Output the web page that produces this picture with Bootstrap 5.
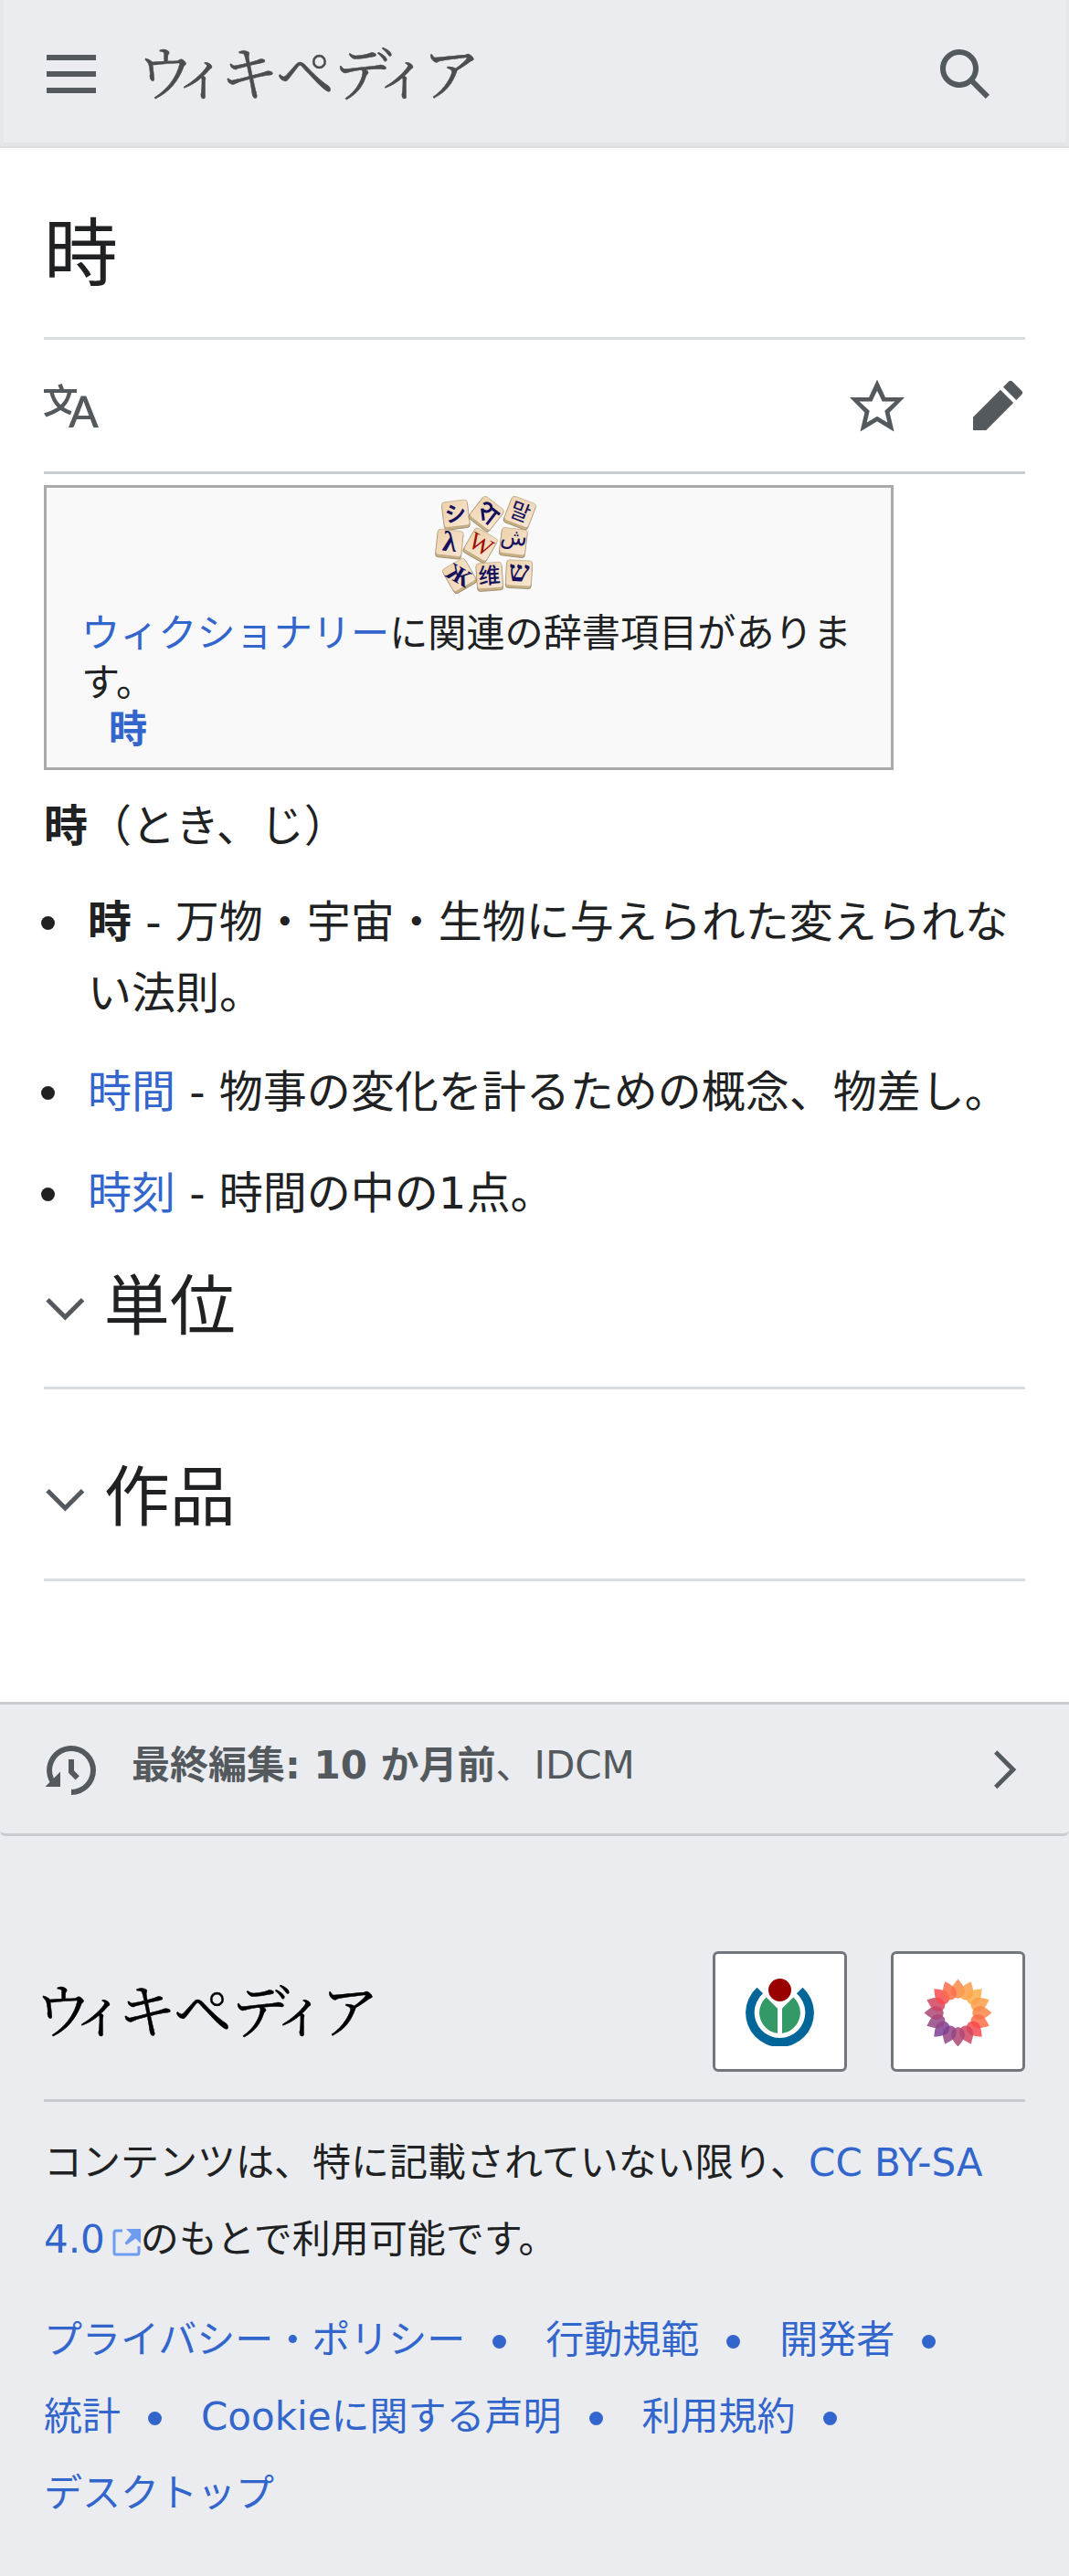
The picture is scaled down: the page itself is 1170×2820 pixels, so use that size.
<!DOCTYPE html>
<html lang="ja">
<head>
<meta charset="utf-8">
<meta name="viewport" content="width=device-width, initial-scale=1">
<title>時 - ウィキペディア</title>
<link href="https://cdn.jsdelivr.net/npm/bootstrap@5.3.0/dist/css/bootstrap.min.css" rel="stylesheet">
<style>
body{font-family:"DejaVu Sans","Noto Sans CJK JP",sans-serif;font-size:48px;line-height:79.2px;color:#202122;background:#eaecf0}
a{color:#36c;text-decoration:none}
svg{display:block;flex:none}
.ico{width:60px;height:60px;fill:#54595d}
.ico-s{width:46.67px;height:46.67px;fill:#54595d}
.btn-plain{padding:0;border:0;background:none}
.site-head{height:162px;padding:0 84px 0 48px;background:#eaecf0;box-shadow:inset 0 -2px 0 #dcdee1,inset 4px 0 0 #e5e7ea,inset -3px 0 0 #e5e7ea,inset 0 -6px 0 #e3e5e8}
.head-brand{padding-left:51px}
.wordmark{width:366px;height:72px;overflow:visible}
.wordmark text{font-family:"Noto Serif CJK JP","Noto Sans CJK JP",sans-serif;font-weight:400;font-size:64px;text-anchor:middle}
.page-body{background:#fff;padding:0 48px;height:1701px}
.page-title{height:210px;padding-top:58px;font-size:81px;line-height:117px;border-bottom:3px solid #dadde0;margin:0}
.tools{height:147px;border-bottom:3px solid #c8ccd1}
.tool-gap{margin-right:72px}
.sister{width:930px;height:312px;margin-top:12px;padding:9px 1px 0 38px;border:3px solid #aaa;background:#f9f9f9;font-size:42.15px;line-height:54px}
.sister svg{margin:0 auto 16px}
.sister-link{padding-left:30px;line-height:48px}
.lede{margin:22px 0 26px}
.defs{margin:0 0 0 -3px;padding:0;list-style:none}
.defs li{display:flex;gap:36px;line-height:78px}
.defs li::before{content:"";flex:none;width:15px;height:15px;border-radius:50%;background:#202122;margin-top:33px}
.defs li+li{margin-top:30px}
.defs li+li+li{margin-top:33px}
.sec{border-bottom:3px solid #dadde0}
.sec h2{font-size:72px;line-height:96px;margin:0 0 0 19px;font-weight:400}
.sec-first{height:176px;padding-top:4px}
.sec-first h2{padding-bottom:8px}
.sec-next{height:210px;padding-top:36px}
.sec-next h2{padding-bottom:8px}
.last-mod{height:147px;padding:2px 48px 0;border-top:3px solid #c8ccd1;border-bottom:3px solid #c8ccd1;border-radius:0 0 6px 6px;color:#54595d;font-size:42px}
.last-mod span{padding:0 0 10px 36px}
.foot{padding:126px 48px 0;font-size:42px;line-height:84px}
.foot-top{height:165px;border-bottom:3px solid #c8ccd1}
.foot-top .wordmark{margin-top:30px}
.logo-btn{width:147px;height:132px;border:3px solid #72777d;border-radius:6px;background:#fff}
.license{margin:25px 0 26px}
.places{list-style:none;margin:0;padding:0}
.places li{display:inline-flex;align-items:center;vertical-align:top;margin-right:43px}
.places li:not(:last-child)::after{content:"";width:15px;height:15px;border-radius:50%;background:#36c;margin-left:30px;margin-top:2px}
.ext{display:inline-block;width:31px;height:31px;margin:0 0 0 8px;vertical-align:-4px}
</style>
<script src="https://cdn.jsdelivr.net/npm/bootstrap@5.3.0/dist/js/bootstrap.bundle.min.js"></script>
</head>
<body>
<header class="site-head d-flex align-items-center">
  <button class="btn-plain" aria-label="メニュー"><svg class="ico" viewBox="0 0 20 20"><path d="M1 3v2h18V3zm0 8h18V9H1zm0 6h18v-2H1z"/></svg></button>
  <a href="#" class="head-brand flex-grow-1"><svg class="wordmark" viewBox="0 0 366 72" fill="#4b4d50" stroke="#4b4d50" stroke-width=".5"><text y="59" x="22 61 114 175 238 281 335">ウィキペディア</text></svg></a>
  <button class="btn-plain" aria-label="検索"><svg class="ico" viewBox="0 0 20 20"><path d="M12.2 13.6a7 7 0 1 1 1.4-1.4l5.4 5.4-1.4 1.4zM3 8a5 5 0 1 0 10 0A5 5 0 0 0 3 8"/></svg></button>
</header>
<main class="page-body">
  <h1 class="page-title fw-normal">時</h1>
  <nav class="tools d-flex align-items-center">
    <svg class="ico me-auto" viewBox="0 0 20 20"><path d="M20 18h-1.44a.6.6 0 0 1-.4-.12.8.8 0 0 1-.23-.31L17 15h-5l-1 2.54a.8.8 0 0 1-.22.3.6.6 0 0 1-.4.14H9l4.55-11.47h1.89zm-3.53-4.31L14.89 9.5a12 12 0 0 1-.39-1.24q-.09.37-.19.69l-.19.56-1.58 4.19zm-6.3-1.58a13.4 13.4 0 0 1-2.91-1.41 11.46 11.46 0 0 0 2.81-5.37H12V4H7.31a4 4 0 0 0-.2-.56C6.87 2.79 6.6 2 6.6 2l-1.47.5s.4.89.6 1.5H0v1.33h2.15A11.23 11.23 0 0 0 5 10.7a17.2 17.2 0 0 1-5 2.1q.56.82.87 1.38a23.3 23.3 0 0 0 5.22-2.51 15.6 15.6 0 0 0 3.56 1.77zM3.63 5.33h4.91a8.1 8.1 0 0 1-2.45 4.45 9.1 9.1 0 0 1-2.46-4.45"/></svg>
    <svg class="ico tool-gap" viewBox="0 0 20 20"><path d="M20 7h-7L10 .5 7 7H0l5.46 5.47-1.64 7 6.18-3.7 6.18 3.73-1.63-7zm-10 6.9-3.76 2.27 1-4.28L3.5 8.5h4.61L10 4.6l1.9 3.9h4.6l-3.73 3.4 1 4.28z"/></svg>
    <svg class="ico" viewBox="0 0 20 20"><path d="m16.77 8 1.94-2a1 1 0 0 0 0-1.41l-3.34-3.3a1 1 0 0 0-1.41 0L12 3.23zM1 14.25V19h4.75l9.96-9.96-4.75-4.75z"/></svg>
  </nav>
  <aside class="sister">
    <svg width="113" height="108" viewBox="45 38 339 324">
      <defs>
        <linearGradient id="wood" x1="0" y1="0" x2="1" y2="1"><stop offset="0" stop-color="#ecd2ab"/><stop offset="1" stop-color="#f9e6d2"/></linearGradient>
        <g id="tile"><rect x="-42" y="-38" width="84" height="88" rx="9" fill="#c9b183" stroke="#86745a" stroke-width="2"/><rect x="-42" y="-42" width="84" height="84" rx="9" fill="url(#wood)" stroke="#a8926c" stroke-width="1.5"/></g>
      </defs>
      <g fill="#14105e" text-anchor="middle" font-family="'DejaVu Serif','Noto Sans CJK JP',serif">
        <g transform="translate(116 96) rotate(-7)"><use href="#tile"/><text y="25" font-size="70" font-weight="bold" font-family="Noto Sans CJK JP">シ</text></g>
        <g transform="translate(219 94) rotate(38)"><use href="#tile"/><path d="M4-22H36M22-22V30M-26-16C-24-32 4-34 2-14C0 2-18 2-22-2L6 26" fill="none" stroke="#14105e" stroke-width="9"/></g>
        <g transform="translate(328 90) rotate(21)"><use href="#tile"/><text y="25" font-size="70" font-family="Noto Sans CJK KR">말</text></g>
        <g transform="translate(96 192) rotate(6)"><use href="#tile"/><text y="27" font-size="94" font-weight="bold" font-family="Liberation Serif">λ</text></g>
        <g transform="translate(306 187) rotate(7)"><use href="#tile"/><text y="10" font-size="72" font-family="DejaVu Sans">ش</text></g>
        <g transform="translate(199 197) rotate(30)"><use href="#tile"/><text y="27" font-size="82" fill="#a01008" font-family="Liberation Serif">W</text></g>
        <g transform="translate(127 297) rotate(-30)"><use href="#tile"/><text y="27" font-size="80" font-weight="bold" font-family="Liberation Serif" transform="rotate(60)">Ж</text></g>
        <g transform="translate(227 299) rotate(-4)"><use href="#tile"/><text y="26" font-size="72" font-weight="500" font-family="Noto Sans CJK SC">维</text></g>
        <g transform="translate(324 291) rotate(3)"><use href="#tile"/><text y="27" font-size="96" font-weight="bold" font-family="Liberation Serif">ש</text></g>
      </g>
    </svg>
    <div><a href="#">ウィクショナリー</a>に関連の辞書項目があります。</div>
    <div class="sister-link"><a href="#"><b>時</b></a></div>
  </aside>
  <p class="lede"><b>時</b>（とき、じ）</p>
  <ul class="defs">
    <li><div><b>時</b> - 万物・宇宙・生物に与えられた変えられない法則。</div></li>
    <li><div><a href="#">時間</a> - 物事の変化を計るための概念、物差し。</div></li>
    <li><div><a href="#">時刻</a> - 時間の中の1点。</div></li>
  </ul>
  <section class="sec sec-first d-flex align-items-center"><svg class="ico-s" viewBox="0 0 20 20"><path d="m17.5 4.75-7.5 7.5-7.5-7.5L1 6.25l9 9 9-9z"/></svg><h2>単位</h2></section>
  <section class="sec sec-next d-flex align-items-center"><svg class="ico-s" viewBox="0 0 20 20"><path d="m17.5 4.75-7.5 7.5-7.5-7.5L1 6.25l9 9 9-9z"/></svg><h2>作品</h2></section>
</main>
<a href="#" class="last-mod d-flex align-items-center">
  <svg class="ico" viewBox="0 0 20 20"><path d="M9 6v5h.06l2.48 2.47 1.41-1.41L11 10.11V6z"/><path d="M10 1a9 9 0 0 0-7.85 13.35L.5 16H6v-5.5l-2.38 2.38A7 7 0 1 1 10 17v2a9 9 0 0 0 0-18"/></svg>
  <span class="me-auto"><b>最終編集: 10 か月前</b>、IDCM</span>
  <svg class="ico-s" viewBox="0 0 20 20"><path d="M7 1 5.6 2.5 13 10l-7.4 7.5L7 19l9-9z"/></svg>
</a>
<footer class="foot">
  <div class="foot-top d-flex align-items-start">
    <svg class="wordmark me-auto" viewBox="0 0 366 72" fill="#000" stroke="#000" stroke-width=".5"><text y="59" x="21 60 113 174 237 280 335">ウィキペディア</text></svg>
    <a href="#" class="logo-btn d-flex align-items-center justify-content-center me-5"><svg width="75" height="75" viewBox="-37.5 -38.5 75 75"><path d="M-25-27.8A37.4 37.4 0 1 0 25-27.8L18.4-21.2A27.8 27.8 0 1 1-18.4-21.2Z" fill="#069"/><path d="M-14.8-17L-2.5-4.7V22.2A22.5 22.5 0 0 1-14.8-17ZM14.8-17L2.5-4.7V22.2A22.5 22.5 0 0 0 14.8-17Z" fill="#396"/><circle cy="-25" r="12.5" fill="#900"/></svg></a>
    <a href="#" class="logo-btn d-flex align-items-center justify-content-center"><svg width="75" height="75" viewBox="-37.5 -38.5 75 75"><defs><path id="petal" d="M0-37C5-31 8-27 7.3-23C6.5-18 3-15.8 0-15.8C-3-15.8-6.5-18-7.3-23C-8-27-5-31 0-37Z"/></defs>
      <g fill-opacity=".85">
      <use href="#petal" fill="#f98a48"/><use href="#petal" fill="#fa9e4a" transform="rotate(22.5)"/><use href="#petal" fill="#fbab48" transform="rotate(45)"/><use href="#petal" fill="#fa9e48" transform="rotate(67.5)"/><use href="#petal" fill="#fa8548" transform="rotate(90)"/><use href="#petal" fill="#f96d48" transform="rotate(112.5)"/><use href="#petal" fill="#f5484e" transform="rotate(135)"/><use href="#petal" fill="#d04562" transform="rotate(157.5)"/><use href="#petal" fill="#ae4676" transform="rotate(180)"/><use href="#petal" fill="#934586" transform="rotate(202.5)"/><use href="#petal" fill="#7e4094" transform="rotate(225)"/><use href="#petal" fill="#934586" transform="rotate(247.5)"/><use href="#petal" fill="#ae4676" transform="rotate(270)"/><use href="#petal" fill="#d04562" transform="rotate(292.5)"/><use href="#petal" fill="#f74b4e" transform="rotate(315)"/><use href="#petal" fill="#f96d48" transform="rotate(337.5)"/></g></svg></a>
  </div>
  <p class="license">コンテンツは、特に記載されていない限り、<a href="#">CC BY-SA 4.0<svg class="ext" viewBox="0 0 31 31" fill="#6d9cf0"><path d="M15 1H31V17L25.500 11.500 15.500 18.500 13.500 16.500 21 7z"/><path d="M11 3H4a2 2 0 0 0-2 2V27a2 2 0 0 0 2 2H27a2 2 0 0 0 2-2V20" fill="none" stroke="#6d9cf0" stroke-width="3"/></svg></a>のもとで利用可能です。</p>
  <ul class="places">
    <li><a href="#">プライバシー・ポリシー</a></li><li><a href="#">行動規範</a></li><li><a href="#">開発者</a></li><li><a href="#">統計</a></li><li><a href="#">Cookieに関する声明</a></li><li><a href="#">利用規約</a></li><li><a href="#">デスクトップ</a></li>
  </ul>
</footer>
</body>
</html>
